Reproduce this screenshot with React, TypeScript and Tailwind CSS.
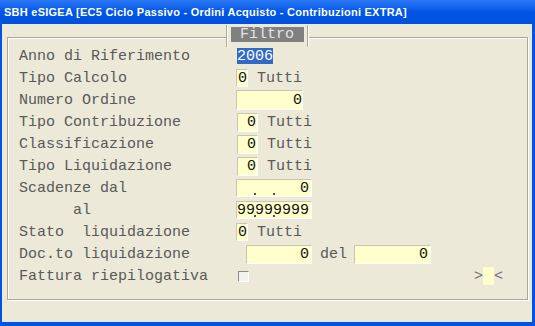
import React from "react";

const mono = { fontFamily: '"Liberation Mono", "Courier New", monospace' };

function Field({ w, h = 18, children, className = "" }: { w: number; h?: number; children?: React.ReactNode; className?: string }) {
  return (
    <div
      className={"relative flex items-center justify-end bg-[#ffffcc] border-t border-l border-t-[#c8c5b4] border-l-[#c8c5b4] border-b border-r border-b-white border-r-white text-[#111] text-[15px] leading-none " + className}
      style={{ width: w, height: h }}
    >
      {children}
    </div>
  );
}

function Label({ children }: { children: React.ReactNode }) {
  return <div className="w-[217px] shrink-0 whitespace-pre text-[#595959]">{children}</div>;
}

function Row({ children }: { children: React.ReactNode }) {
  return <div className="flex h-[22px] items-center">{children}</div>;
}

function Tutti() {
  return <span className="ml-[9px] text-[#595959]">Tutti</span>;
}

function Dots() {
  return (
    <>
      <span className="absolute left-[17px] bottom-[1px] h-[2px] w-[2px] bg-[#555]" />
      <span className="absolute left-[36px] bottom-[1px] h-[2px] w-[2px] bg-[#555]" />
    </>
  );
}

export default function App() {
  return (
    <div className="flex h-[326px] w-[535px] flex-col bg-[#0054e3]">
      <div className="flex h-[24px] shrink-0 items-center bg-gradient-to-b from-[#2a78f5] via-[#0056e6] to-[#0050dc] pl-[4px]">
        <span
          className="whitespace-pre text-[11px] font-bold text-white tracking-[0.25px]"
          style={{ fontFamily: '"Liberation Sans", Tahoma, sans-serif' }}
        >
          SBH eSIGEA [EC5 Ciclo Passivo - Ordini Acquisto - Contribuzioni EXTRA]
        </span>
      </div>
      <div className="ml-[2px] mr-[3px] mb-[4px] flex-1 bg-[#ece9d8]">
        <div
          className="relative ml-[5px] mt-[13px] h-[263px] w-[521px] border border-[#aca899] shadow-[inset_1px_1px_0_#fff,1px_1px_0_#fff] pl-[11px] pt-[7px] text-[15px] leading-none"
          style={mono}
        >
          <div className="absolute left-[218px] top-[-13px] flex h-[22px] w-[82px] justify-center border-l border-r border-l-[#aca899] border-r-[#aca899] bg-[#ece9d8] shadow-[inset_1px_0_0_#fff,1px_0_0_#fff] pt-[2px]">
            <div className="flex h-[15px] w-[73px] items-center justify-center bg-[#808080] text-[#e4e4e4]">Filtro</div>
          </div>

          <Row>
            <Label>Anno di Riferimento</Label>
            <span className="ml-[1px] flex h-[16px] items-center bg-[#316ac5] text-white">2006</span>
          </Row>
          <Row>
            <Label>Tipo Calcolo</Label>
            <Field w={12}>0</Field>
            <Tutti />
          </Row>
          <Row>
            <Label>Numero Ordine</Label>
            <Field w={67} h={20}>0</Field>
          </Row>
          <Row>
            <Label>Tipo Contribuzione</Label>
            <Field w={21} h={19} className="ml-[1px] pr-[1px]">0</Field>
            <Tutti />
          </Row>
          <Row>
            <Label>Classificazione</Label>
            <Field w={21} h={19} className="ml-[1px] pr-[1px]">0</Field>
            <Tutti />
          </Row>
          <Row>
            <Label>Tipo Liquidazione</Label>
            <Field w={21} h={19} className="ml-[1px] pr-[1px]">0</Field>
            <Tutti />
          </Row>
          <Row>
            <Label>Scadenze dal</Label>
            <Field w={76} h={18} className="pr-[2px]">
              0
              <Dots />
            </Field>
          </Row>
          <Row>
            <Label>{"      al"}</Label>
            <Field w={76} h={18} className="pr-[2px]">
              99999999
              <Dots />
            </Field>
          </Row>
          <Row>
            <Label>Stato  liquidazione</Label>
            <Field w={12}>0</Field>
            <Tutti />
          </Row>
          <Row>
            <Label>Doc.to liquidazione</Label>
            <Field w={66} h={19} className="ml-[10px] pr-[2px]">0</Field>
            <span className="ml-[8px] text-[#595959]">del</span>
            <Field w={77} h={19} className="ml-[7px] pr-[2px]">0</Field>
          </Row>
          <Row>
            <Label>Fattura riepilogativa</Label>
            <div className="ml-[2px] h-[11px] w-[11px] border-t border-l border-t-[#8a8a8a] border-l-[#8a8a8a] border-b border-r border-b-white border-r-white bg-[#f3f2ec]" />
            <span className="ml-[225px] text-[#707070]">&gt;</span>
            <div className="h-[18px] w-[11px] bg-[#ffffcc]" />
            <span className="text-[#707070]">&lt;</span>
          </Row>
        </div>
      </div>
    </div>
  );
}
